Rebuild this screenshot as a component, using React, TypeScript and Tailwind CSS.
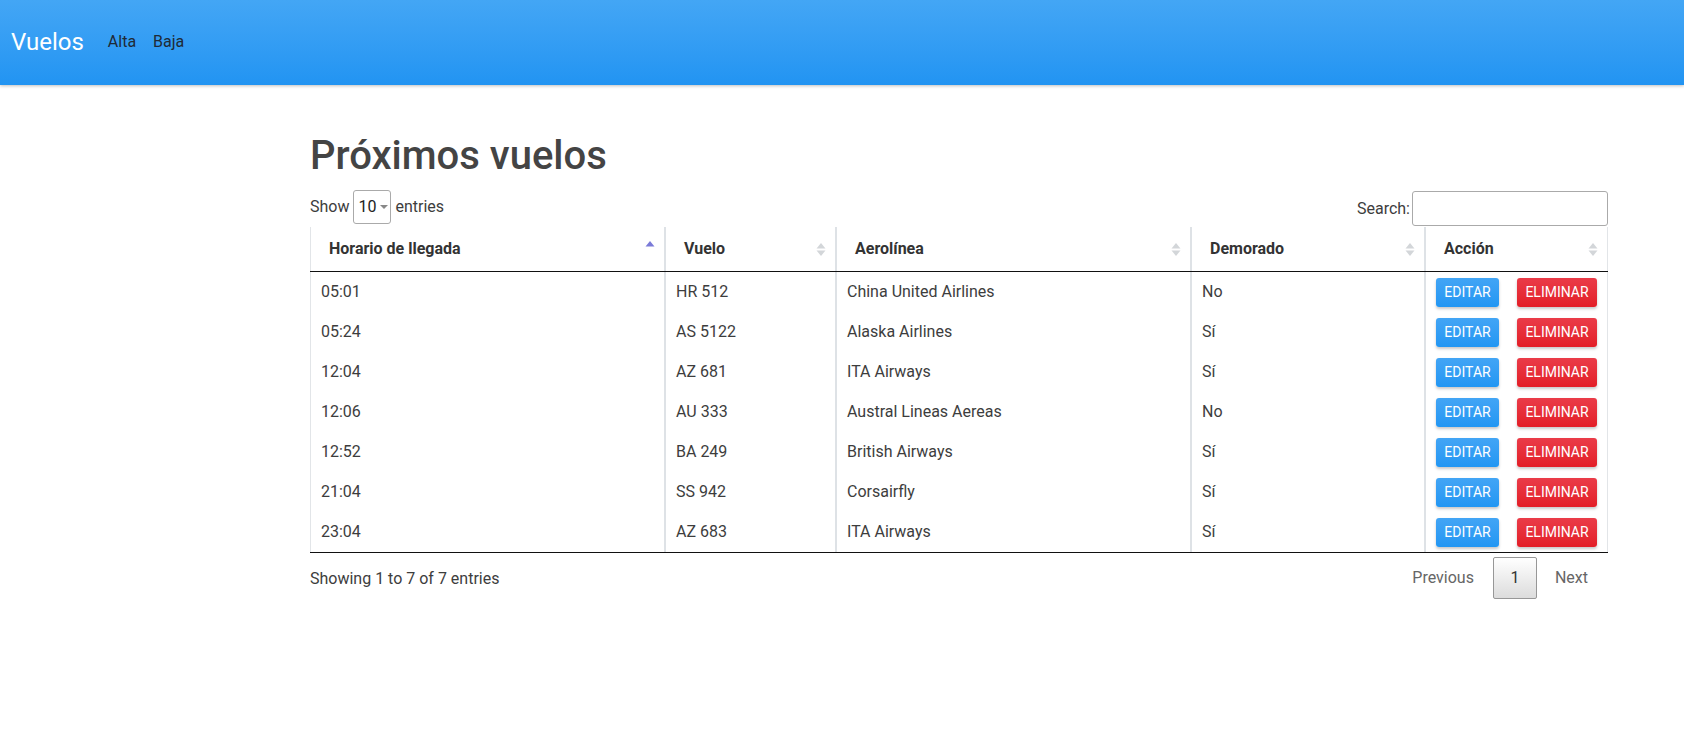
import React from 'react';

type Flight = { time: string; code: string; airline: string; delayed: string };

const flights: Flight[] = [
  { time: '05:01', code: 'HR 512', airline: 'China United Airlines', delayed: 'No' },
  { time: '05:24', code: 'AS 5122', airline: 'Alaska Airlines', delayed: 'Sí' },
  { time: '12:04', code: 'AZ 681', airline: 'ITA Airways', delayed: 'Sí' },
  { time: '12:06', code: 'AU 333', airline: 'Austral Lineas Aereas', delayed: 'No' },
  { time: '12:52', code: 'BA 249', airline: 'British Airways', delayed: 'Sí' },
  { time: '21:04', code: 'SS 942', airline: 'Corsairfly', delayed: 'Sí' },
  { time: '23:04', code: 'AZ 683', airline: 'ITA Airways', delayed: 'Sí' },
];

const headers = ['Horario de llegada', 'Vuelo', 'Aerolínea', 'Demorado', 'Acción'];

const SortIcon: React.FC<{ active?: boolean }> = ({ active }) =>
  active ? (
    <svg width="10" height="15" viewBox="0 0 10 15" className="absolute right-[9px] top-[13px]">
      <path d="M0.5 6.5 L5 1 L9.5 6.5 Z" fill="#7a7ad8" />
    </svg>
  ) : (
    <svg width="10" height="15" viewBox="0 0 10 15" className="absolute right-[9px] top-[15px]">
      <path d="M0.5 6.5 L5 1 L9.5 6.5 Z" fill="#d3d6d9" />
      <path d="M0.5 8.5 L5 14 L9.5 8.5 Z" fill="#d3d6d9" />
    </svg>
  );

const App: React.FC = () => {
  const font = { fontFamily: 'Roboto, "Liberation Sans", sans-serif' };
  const cols = 'grid grid-cols-[354px_171px_355px_234px_184px]';

  return (
    <div className="min-h-[737px] bg-white text-[#3d3d3d]" style={font}>
      <nav className="h-[85px] bg-gradient-to-b from-[#43a6f5] to-[#2194f2] shadow-[0_1px_3px_rgba(0,0,0,0.25)] flex items-center pl-[11px] pb-[1px]">
        <span className="text-[24px] text-white leading-none mr-[24px]">Vuelos</span>
        <a className="text-[16px] text-[#1f2a36] mr-[17px]">Alta</a>
        <a className="text-[16px] text-[#1f2a36]">Baja</a>
      </nav>

      <div className="ml-[310px] w-[1298px] pt-[47px]">
        <h1 className="text-[40px] leading-[48px] font-medium text-[#444]">Próximos vuelos</h1>

        <div className="flex justify-between items-end h-[47px] pb-[1px]">
          <div className="flex items-center text-[16px] mb-[2px]">
            <span>Show</span>
            <div className="mx-[4px] w-[38px] h-[34px] border border-[#aaa] rounded-[3px] flex items-center pl-[4px] text-[#222]">
              <span>10</span>
              <svg width="8" height="5" viewBox="0 0 8 5" className="ml-[4px]">
                <path d="M0 0 L8 0 L4 4 Z" fill="#888" />
              </svg>
            </div>
            <span>entries</span>
          </div>
          <div className="flex items-center text-[16px]">
            <span className="mr-[2px]">Search:</span>
            <div className="w-[196px] h-[35px] border border-[#aaa] rounded-[3px] bg-white" />
          </div>
        </div>

        <div className="border-b border-[#111]">
          <div className={`${cols} h-[45px] border-b border-[#111]`}>
            {headers.map((h, i) => (
              <div
                key={h}
                className={`relative flex items-center pl-[18px] font-bold text-[16px] text-[#333] ${
                  i === 0 ? 'border-l border-[#e2e5e8]' : 'border-l-2 border-[#dee2e6]'
                } ${i === 4 ? 'border-r border-r-[#e2e5e8]' : ''}`}
              >
                {h}
                <SortIcon active={i === 0} />
              </div>
            ))}
          </div>
          {flights.map((f) => (
            <div key={f.time + f.code} className={`${cols} h-[40px] text-[16px]`}>
              <div className="flex items-center pl-[10px] border-l border-[#e2e5e8]">{f.time}</div>
              <div className="flex items-center pl-[10px] border-l-2 border-[#dee2e6]">{f.code}</div>
              <div className="flex items-center pl-[10px] border-l-2 border-[#dee2e6]">{f.airline}</div>
              <div className="flex items-center pl-[10px] border-l-2 border-[#dee2e6]">{f.delayed}</div>
              <div className="flex items-center pl-[10px] border-l-2 border-[#dee2e6] border-r border-r-[#e2e5e8] gap-[18px]">
                <button className="w-[63px] h-[29px] rounded-[3px] text-[14px] text-white bg-gradient-to-b from-[#42a5f5] to-[#2196f3] shadow-[0_2px_3px_rgba(0,0,0,0.22)]">
                  EDITAR
                </button>
                <button className="w-[80px] h-[29px] rounded-[3px] text-[14px] text-white bg-gradient-to-b from-[#ea3b48] to-[#e31d26] shadow-[0_2px_3px_rgba(0,0,0,0.22)]">
                  ELIMINAR
                </button>
              </div>
            </div>
          ))}
        </div>

        <div className="flex justify-between items-start pt-[4px]">
          <div className="text-[16px] pt-[10px]">Showing 1 to 7 of 7 entries</div>
          <div className="flex items-center text-[16px] mr-[4px]">
            <span className="px-[16px] py-[9px] text-[#666]">Previous</span>
            <span className="ml-[3px] w-[44px] h-[42px] flex items-center justify-center border border-[#979797] rounded-[2px] bg-gradient-to-b from-white to-[#dcdcdc] text-[#333]">
              1
            </span>
            <span className="ml-[2px] px-[16px] py-[9px] text-[#666]">Next</span>
          </div>
        </div>
      </div>
    </div>
  );
};

export default App;
